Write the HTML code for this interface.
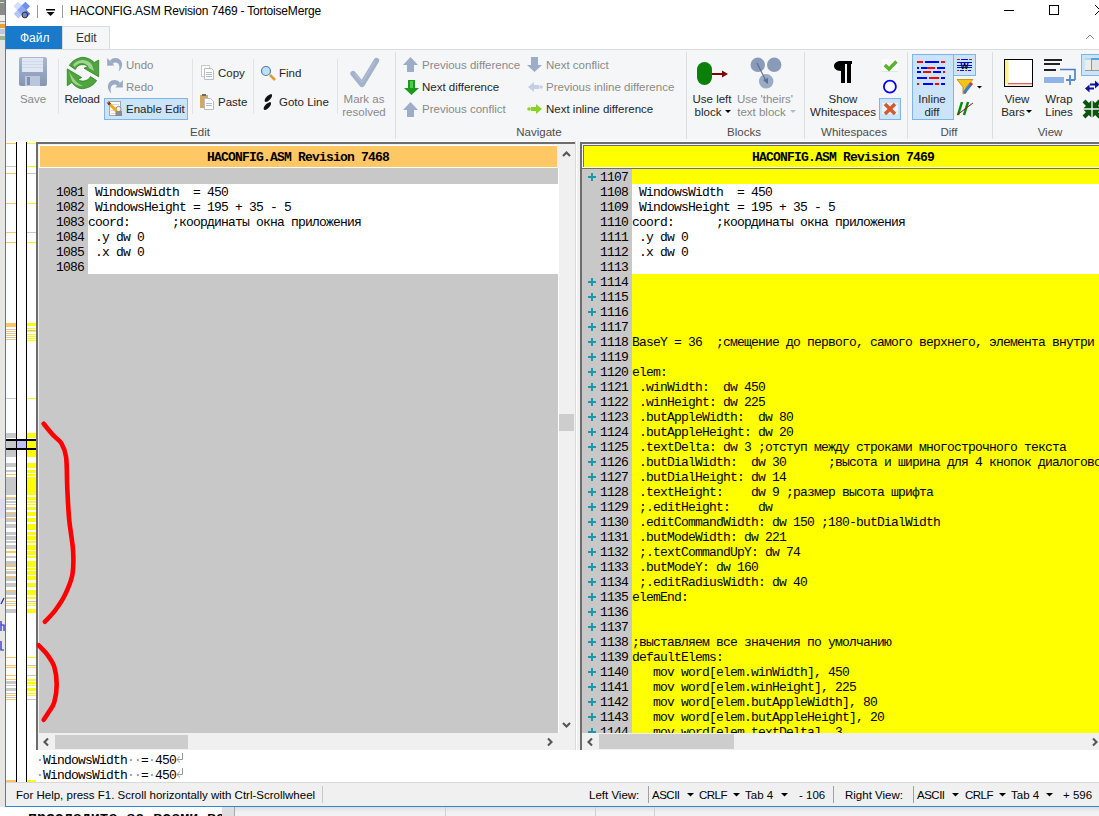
<!DOCTYPE html>
<html><head><meta charset="utf-8">
<style>
*{margin:0;padding:0;box-sizing:border-box}
html,body{width:1099px;height:816px;overflow:hidden;background:#fff;position:relative}
body{font-family:"Liberation Sans",sans-serif;font-size:11.5px;color:#000}
.a{position:absolute}
.t{position:absolute;white-space:pre;line-height:14px}
.row{position:absolute;height:15px;white-space:pre;line-height:15px;padding-top:1px;font-family:"Liberation Mono",monospace;font-size:13px;letter-spacing:-0.8px;color:#000}
.plus{width:8px;height:8px}
.plus:before{content:"";position:absolute;left:3px;top:0;width:2.2px;height:8px;background:#1b98ad}
.plus:after{content:"";position:absolute;left:0;top:2.9px;width:8px;height:2.2px;background:#1b98ad}
</style></head><body>
<!-- outside window -->
<div class="a" style="left:0;top:0;width:5px;height:816px;background:#e6e6e6"></div>
<div class="a" style="left:0;top:0;width:5px;height:15px;background:#8a8a8a"></div>
<div class="a" style="left:0;top:2px;width:4px;height:1px;background:#ddd"></div>
<div class="a" style="left:0;top:15px;width:5px;height:6px;background:#eeeeee"></div>
<div class="a" style="left:0;top:21px;width:5px;height:1px;background:#999"></div>
<div class="a" style="left:0;top:24px;width:5px;height:4px;background:#e8a030"></div>
<div class="a" style="left:0;top:29px;width:5px;height:5px;background:#bcc8d8"></div>
<div class="a" style="left:0;top:36px;width:5px;height:4px;background:#9ab890"></div>
<div class="a" style="left:0;top:499px;width:5px;height:19px;background:#dcdcef"></div>
<svg class="a" style="left:0;top:590px" width="5" height="70"><path d="M1,14 L4,8" stroke="#2020d0" stroke-width="1.2"/><path d="M1,31 V41 M1,35 H4 V41" stroke="#2020d0" stroke-width="1.2" fill="none"/><path d="M1,51 V60 H4" stroke="#2020d0" stroke-width="1.2" fill="none"/></svg>
<!-- window border -->
<div class="a" style="left:5px;top:0;width:1px;height:807px;background:#2b88d8"></div>
<!-- title bar -->
<div class="a" style="left:6px;top:0;width:1093px;height:26px;background:#fff"></div>
<div class="t" style="left:70px;top:4px;font-size:12px;letter-spacing:-0.18px">HACONFIG.ASM Revision 7469 - TortoiseMerge</div>
<!-- tabs -->
<div class="a" style="left:6px;top:26px;width:1093px;height:23px;background:#fff"></div>
<div class="a" style="left:6px;top:26px;width:56px;height:23px;background:#1979ca"></div>
<div class="t" style="left:20px;top:31px;color:#fff;font-size:12px">Файл</div>
<div class="a" style="left:62px;top:26px;width:48px;height:24px;background:#f5f6f7;border:1px solid #dadbdc;border-bottom:none"></div>
<div class="t" style="left:76px;top:31px;font-size:12px;color:#333">Edit</div>
<!-- ribbon -->
<div class="a" style="left:6px;top:49px;width:1093px;height:92px;background:#f5f6f7;border-top:1px solid #dadbdc"></div>
<div class="a" style="left:104px;top:98px;width:84px;height:22px;background:#cce4f7;border:1px solid #7fb4ea"></div>
<div class="a" style="left:879px;top:98px;width:22px;height:22px;background:#cce4f7;border:1px solid #7fb4ea"></div>
<div class="a" style="left:912px;top:54px;width:42px;height:66px;background:#cce4f7;border:1px solid #7fb4ea"></div>
<div class="a" style="left:953px;top:54px;width:23px;height:22px;background:#cce4f7;border:1px solid #7fb4ea"></div>
<div class="a" style="left:1081px;top:54px;width:29px;height:22px;background:#cce4f7;border:1px solid #7fb4ea"></div>
<div class="a" style="left:58px;top:59px;width:1px;height:55px;background:#e1e3e6"></div>
<div class="a" style="left:192px;top:59px;width:1px;height:55px;background:#e1e3e6"></div>
<div class="a" style="left:253px;top:59px;width:1px;height:55px;background:#e1e3e6"></div>
<div class="a" style="left:337px;top:59px;width:1px;height:55px;background:#e1e3e6"></div>
<div class="a" style="left:395px;top:52px;width:1px;height:87px;background:#dcdde0"></div>
<div class="a" style="left:686px;top:52px;width:1px;height:87px;background:#dcdde0"></div>
<div class="a" style="left:804px;top:52px;width:1px;height:87px;background:#dcdde0"></div>
<div class="a" style="left:907px;top:52px;width:1px;height:87px;background:#dcdde0"></div>
<div class="a" style="left:992px;top:52px;width:1px;height:87px;background:#dcdde0"></div>
<div class="t" style="left:-67px;width:200px;text-align:center;top:92px;color:#8a8a8a;font-size:11.5px;">Save</div>
<div class="t" style="left:-18px;width:200px;text-align:center;top:92px;color:#262626;font-size:11.5px;letter-spacing:-0.2px">Reload</div>
<div class="t" style="left:126px;top:58px;color:#8a8a8a;font-size:11.5px;">Undo</div>
<div class="t" style="left:126px;top:80px;color:#8a8a8a;font-size:11.5px;">Redo</div>
<div class="t" style="left:126px;top:102px;color:#262626;font-size:11.5px;">Enable Edit</div>
<div class="t" style="left:218px;top:66px;color:#262626;font-size:11.5px;">Copy</div>
<div class="t" style="left:218px;top:95px;color:#262626;font-size:11.5px;">Paste</div>
<div class="t" style="left:279px;top:66px;color:#262626;font-size:11.5px;">Find</div>
<div class="t" style="left:279px;top:95px;color:#262626;font-size:11.5px;">Goto Line</div>
<div class="t" style="left:264px;width:200px;text-align:center;top:92px;color:#8a8a8a;font-size:11.5px;">Mark as</div>
<div class="t" style="left:264px;width:200px;text-align:center;top:105px;color:#8a8a8a;font-size:11.5px;">resolved</div>
<div class="t" style="left:422px;top:58px;color:#8a8a8a;font-size:11.5px;">Previous difference</div>
<div class="t" style="left:422px;top:80px;color:#262626;font-size:11.5px;">Next difference</div>
<div class="t" style="left:422px;top:102px;color:#8a8a8a;font-size:11.5px;">Previous conflict</div>
<div class="t" style="left:546px;top:58px;color:#8a8a8a;font-size:11.5px;">Next conflict</div>
<div class="t" style="left:546px;top:80px;color:#8a8a8a;font-size:11.5px;">Previous inline difference</div>
<div class="t" style="left:546px;top:102px;color:#262626;font-size:11.5px;">Next inline difference</div>
<div class="t" style="left:612px;width:200px;text-align:center;top:92px;color:#262626;font-size:11.5px;">Use left</div>
<div class="t" style="left:608px;width:200px;text-align:center;top:105px;color:#262626;font-size:11.5px;">block</div>
<div class="t" style="left:665px;width:200px;text-align:center;top:92px;color:#8a8a8a;font-size:11.5px;">Use &#x27;theirs&#x27;</div>
<div class="t" style="left:661.5px;width:200px;text-align:center;top:105px;color:#8a8a8a;font-size:11.5px;">text block</div>
<div class="t" style="left:743px;width:200px;text-align:center;top:92px;color:#262626;font-size:11.5px;">Show</div>
<div class="t" style="left:743px;width:200px;text-align:center;top:105px;color:#262626;font-size:11.5px;">Whitespaces</div>
<div class="t" style="left:832px;width:200px;text-align:center;top:92px;color:#262626;font-size:11.5px;">Inline</div>
<div class="t" style="left:832px;width:200px;text-align:center;top:105px;color:#262626;font-size:11.5px;">diff</div>
<div class="t" style="left:917px;width:200px;text-align:center;top:92px;color:#262626;font-size:11.5px;">View</div>
<div class="t" style="left:913px;width:200px;text-align:center;top:105px;color:#262626;font-size:11.5px;">Bars</div>
<div class="t" style="left:959px;width:200px;text-align:center;top:92px;color:#262626;font-size:11.5px;">Wrap</div>
<div class="t" style="left:959px;width:200px;text-align:center;top:105px;color:#262626;font-size:11.5px;">Lines</div>
<div class="t" style="left:100px;width:200px;text-align:center;top:125px;color:#4c4c4c;font-size:11.5px;">Edit</div>
<div class="t" style="left:439px;width:200px;text-align:center;top:125px;color:#4c4c4c;font-size:11.5px;">Navigate</div>
<div class="t" style="left:644px;width:200px;text-align:center;top:125px;color:#4c4c4c;font-size:11.5px;">Blocks</div>
<div class="t" style="left:754px;width:200px;text-align:center;top:125px;color:#4c4c4c;font-size:11.5px;">Whitespaces</div>
<div class="t" style="left:849px;width:200px;text-align:center;top:125px;color:#4c4c4c;font-size:11.5px;">Diff</div>
<div class="t" style="left:950px;width:200px;text-align:center;top:125px;color:#4c4c4c;font-size:11.5px;">View</div>
<svg class="a" style="left:0;top:0" width="1099" height="142" viewBox="0 0 1099 142">
<defs>
<linearGradient id="gb" x1="0" y1="0" x2="0" y2="1"><stop offset="0" stop-color="#a9b8d0"/><stop offset="1" stop-color="#8596b5"/></linearGradient>
<linearGradient id="gg" x1="0" y1="0" x2="1" y2="0"><stop offset="0" stop-color="#2a9a2a"/><stop offset="0.5" stop-color="#1aa51a"/><stop offset="1" stop-color="#0c7d0c"/></linearGradient>
</defs>
<!-- title bar icons -->
<g>
<polygon points="18,1.7000000000000002 22.6,6.3 18,10.899999999999999 13.4,6.3" fill="#d5defb"/><polygon points="25.4,1.7000000000000002 30.0,6.3 25.4,10.899999999999999 20.799999999999997,6.3" fill="#6f8ff2"/><polygon points="18.4,9.200000000000001 23.0,13.8 18.4,18.4 13.799999999999999,13.8" fill="#b3c4f6"/><polygon points="25.7,9.200000000000001 30.299999999999997,13.8 25.7,18.4 21.1,13.8" fill="#5577e8"/><polygon points="21.8,5.4 26.4,10 21.8,14.6 17.200000000000003,10" fill="#8fa8f4"/>
<circle cx="24.8" cy="15" r="2.8" fill="#7289b0" stroke="#333" stroke-width="1"/>
<rect x="37" y="5" width="1" height="13" fill="#999"/>
<rect x="46" y="9" width="9" height="1.5" fill="#000"/>
<path d="M46.5,12 L54.5,12 L50.5,16 Z" fill="#000"/>
<rect x="62" y="5" width="1" height="13" fill="#999"/>
</g>
<!-- window controls -->
<rect x="1004" y="10" width="10" height="1" fill="#000"/>
<rect x="1049.5" y="5.5" width="9" height="9" fill="none" stroke="#000" stroke-width="1"/>
<path d="M1095,5 L1105,15 M1105,5 L1095,15" stroke="#000" stroke-width="1"/>
<path d="M1086,39 L1090,35 L1094,39" stroke="#888" stroke-width="1" fill="none"/>

<!-- Save floppy -->
<rect x="19" y="57" width="28" height="29" rx="2" fill="url(#gb)"/>
<rect x="22" y="58" width="21" height="14" fill="#dfe7f3"/>
<rect x="22" y="61" width="21" height="1" fill="#cfd9ea"/>
<rect x="22" y="64" width="21" height="1" fill="#cfd9ea"/>
<rect x="22" y="67" width="21" height="1" fill="#cfd9ea"/>
<rect x="25" y="76" width="15" height="10" fill="#b9c6dc"/>
<rect x="27" y="77" width="3" height="8" fill="#7f90b0"/>

<!-- Reload -->
<g transform="translate(64,54)">
<defs><linearGradient id="rg1" x1="0" y1="0" x2="1" y2="1"><stop offset="0" stop-color="#c9ecc0"/><stop offset="0.6" stop-color="#5cb04a"/><stop offset="1" stop-color="#3a9a2a"/></linearGradient></defs>
<path d="M5.4,11.4 C8,7 13,4 18.6,3.3 C23,3.3 27,5.5 30.3,8.4 L34.7,6.1 L34.7,22.8 L20,14.2 L24.2,12.3 C22,10.8 20,10.5 17,10.7 C14.5,11 12.5,13 11.4,15.4 Z" fill="#4ea53c" stroke="#2f7f22" stroke-width="0.8"/>
<path d="M9,11 C12,7 16,6 19,6 C23,6.5 26,8 28,11 L30,17 L25,14 C24,11 21,9 17,9 C14,9.5 12,11 11,13 Z" fill="#bfe5b3" opacity="0.75"/>
<path d="M32.6,26.5 C30,31 25,34 18.6,34.7 C14,34.7 10,31.5 7.9,28.4 L3.3,31.7 L3.3,14.9 L17.7,23.5 L14,25.4 C16,27 18,27.3 20,27 C22.5,26.8 25.5,25 26.5,22.6 Z" fill="#4ea53c" stroke="#2f7f22" stroke-width="0.8"/>
<path d="M5,18 L8,27 C10,30 14,32 19,32 C15,30 12,28 10,25 Z" fill="#bfe5b3" opacity="0.7"/>
</g>
<!-- Undo / Redo -->
<g transform="translate(104,55)" fill="#9aaac5">
<polygon points="3.2,3 3.2,10.8 10.5,10.5"/>
<path d="M6,5.5 C9,2.2 14,2.2 16.8,5.5 C19,8.5 18.5,13 14.7,16.5 C15.8,13 15.8,10.5 14,8.5 C12.3,6.8 10,7.2 8.5,9 Z"/>
<polygon points="18.9,25 18.9,32.6 11.3,32.6"/>
<path d="M16,27.5 C13,24.2 8,24.2 5.2,27.5 C3,30.5 3.5,35 7.3,38.5 C6.2,35 6.2,32.5 8,30.5 C9.7,28.8 12,29.2 13.5,31 Z"/>
</g>
<!-- Enable edit icon -->
<rect x="109.5" y="101.5" width="11" height="14" fill="#f8f8f8" stroke="#a8a8a8" stroke-width="1"/>
<rect x="111" y="104" width="8" height="1" fill="#d8d8d8"/><rect x="111" y="107" width="8" height="1" fill="#d8d8d8"/><rect x="111" y="110" width="5" height="1" fill="#d8d8d8"/><rect x="111" y="113" width="5" height="1" fill="#d8d8d8"/>
<circle cx="118.5" cy="109" r="2.6" fill="#f4f4f4" stroke="#8a8a8a" stroke-width="1"/>
<rect x="115.5" y="111" width="6.5" height="5" fill="#8c8c8c"/>
<path d="M109.5,104 L116.5,111" stroke="#f0a818" stroke-width="2.8"/>
<path d="M108.3,102.8 L110,104.5" stroke="#3a4a4a" stroke-width="2.8"/>
<path d="M107.5,102 L108.5,103" stroke="#e06030" stroke-width="2.8"/>
<!-- Copy -->
<rect x="201.5" y="65.5" width="8" height="11" fill="#fff" stroke="#c8c8c8"/>
<path d="M204.5,68.5 h7 l2,2 v9 h-9 z" fill="#fff" stroke="#bdbdbd"/>
<rect x="206" y="72" width="6" height="1" fill="#a9bfd9"/><rect x="206" y="74" width="6" height="1" fill="#a9bfd9"/><rect x="206" y="76" width="6" height="1" fill="#a9bfd9"/>
<!-- Paste -->
<rect x="200" y="95" width="8" height="13" fill="#d0ab5e"/>
<rect x="202" y="94" width="4" height="2" fill="#6a6a6a"/>
<path d="M204.5,98.5 h6 l3,3 v8 h-9 z" fill="#fff" stroke="#bdbdbd"/>
<rect x="206" y="103" width="6" height="1" fill="#a9bfd9"/><rect x="206" y="105" width="6" height="1" fill="#a9bfd9"/>

<!-- Find -->
<path d="M270,75 L275,80" stroke="#e39a2a" stroke-width="2.5"/>
<circle cx="266" cy="71" r="4.5" fill="#bfe0f7" stroke="#4d7fb0" stroke-width="1.2"/>
<!-- Goto line -->
<path d="M271,94 C274,95 270,101 266,102 C263,102 265,96 271,94 Z" fill="#111"/>
<path d="M270,102 C273,103 269,109 265,110 C262,110 264,104 270,102 Z" fill="#111"/>

<!-- Mark as resolved -->
<path d="M353,73.5 L362,84.5 L376.5,60.5" stroke="#a3b1ca" stroke-width="5.4" stroke-linecap="round" stroke-linejoin="round" fill="none"/>
<path d="M355,74 L362,82.5 L374.5,62" stroke="#b8c4d8" stroke-width="1.5" stroke-linecap="round" fill="none" opacity="0.6"/>

<!-- nav arrows (up disabled) -->
<g fill="#9eadc7">
<polygon points="410.5,57 418,65 414,65 414,72 407,72 407,65 403,65"/>
<polygon points="410.5,102 418,110 414,110 414,117 407,117 407,110 403,110"/>
<polygon points="534.5,72 542,65 538,65 538,57 531,57 531,65 527,65"/>
</g>
<polygon points="411.5,95 419,88 415,88 415,80 408,80 408,88 404,88" fill="#1a9a1a"/>
<rect x="410" y="81" width="3" height="7" fill="#4fc94f"/>
<!-- prev inline (light) -->
<g fill="#c3d0e3">
<polygon points="528,87 534,82 534,85 539,85 539,89 534,89 534,92"/>
<circle cx="541" cy="87" r="1.8"/>
</g>
<!-- next inline green -->
<g fill="#8ad22a">
<polygon points="542,109 536,104 536,107 531,107 531,111 536,111 536,114"/>
<circle cx="529" cy="109" r="1.8"/>
</g>

<!-- Use left block -->
<rect x="697" y="62" width="15" height="23" rx="7.5" fill="#0a800a"/>
<rect x="712" y="73" width="11" height="2" fill="#800000"/>
<polygon points="722,70.5 728,74 722,77.5" fill="#800000"/>
<polygon points="725,110 731,110 728,113" fill="#000"/>
<!-- Use theirs -->
<circle cx="757.8" cy="64.8" r="7.2" fill="#8a9bb8"/>
<circle cx="774.2" cy="64.8" r="7.2" fill="#8a9bb8"/>
<circle cx="766.2" cy="81.3" r="7.2" fill="#9aabc6"/>
<path d="M757,63 L767,83" stroke="#5b6f93" stroke-width="1.2"/>
<polygon points="768,84 763,80 768,78" fill="#5b6f93"/>
<polygon points="790,110 796,110 793,113" fill="#bbb"/>

<!-- Pilcrow -->
<path d="M841,61 h11 v3 h-1 v19 h-4 v-19 h-2 v19 h-4 v-12 c-5,0 -7,-3 -7,-5 c0,-3 3,-5 7,-5 z" fill="#000"/>
<!-- small ws icons -->
<rect x="882" y="59" width="16" height="12" fill="#fbfbfb"/>
<rect x="882" y="71" width="16" height="1" fill="#e4e4e4"/><path d="M884.8,65 L889,69 L896.5,61.5" stroke="#55b52a" stroke-width="3.4" fill="none"/>
<rect x="882" y="81" width="16" height="12" fill="#fbfbfb"/>
<circle cx="889.9" cy="86.7" r="6" fill="none" stroke="#0000ff" stroke-width="1.8"/>
<rect x="882" y="103" width="16" height="11" fill="#f6f8fb" opacity="0.8"/>
<rect x="882" y="104" width="16" height="1.5" fill="#e8e8e8"/><rect x="882" y="111" width="16" height="1.5" fill="#e8e8e8"/><path d="M885,104 L895,114 M895,104 L885,114" stroke="#d4582e" stroke-width="3.4"/>

<!-- Inline diff icon -->
<g>
<rect x="917" y="61" width="6" height="2" fill="#f00"/><rect x="925" y="61" width="14" height="2" fill="#00f"/><rect x="941" y="61" width="4" height="2" fill="#f00"/>
<rect x="917" y="67" width="2" height="2" fill="#00f"/><rect x="921" y="67" width="6" height="2" fill="#00f"/><rect x="927" y="67" width="8" height="2" fill="#f00"/><rect x="937" y="67" width="8" height="2" fill="#00f"/>
<rect x="917" y="71" width="4" height="2" fill="#00f"/><rect x="923" y="71" width="8" height="2" fill="#f00"/><rect x="933" y="71" width="8" height="2" fill="#00f"/><rect x="943" y="71" width="2" height="2" fill="#f00"/>
<rect x="917" y="77" width="10" height="2" fill="#00f"/><rect x="929" y="77" width="10" height="2" fill="#f00"/><rect x="941" y="77" width="4" height="2" fill="#00f"/>
<rect x="917" y="83" width="2" height="2" fill="#f00"/><rect x="923" y="83" width="10" height="2" fill="#00f"/><rect x="935" y="83" width="4" height="2" fill="#f00"/><rect x="941" y="83" width="4" height="2" fill="#00f"/>
</g>
<!-- W icon -->
<rect x="957" y="59" width="3" height="1" fill="#f00"/><rect x="961" y="59" width="7" height="1" fill="#00f"/><rect x="969" y="59" width="3" height="1" fill="#f00"/>
<rect x="957" y="62" width="15" height="1" fill="#00f"/><rect x="957" y="65" width="15" height="1" fill="#00f"/><rect x="957" y="67" width="15" height="1" fill="#00f"/>
<rect x="957" y="70" width="2" height="1" fill="#f00"/><rect x="960" y="70" width="4" height="1" fill="#00f"/><rect x="965" y="70" width="2" height="1" fill="#f00"/><rect x="968" y="70" width="3" height="1" fill="#00f"/>
<text x="964.5" y="68.5" font-family="Liberation Sans" font-weight="bold" font-size="8.5" text-anchor="middle" fill="#000">W</text>
<!-- funnel -->
<path d="M957,79.5 L973,79.5 L966,87 L966,93 L963,94 L963,87 Z" fill="#f5c514" stroke="#b8860b" stroke-width="0.8"/>
<path d="M964,93 L971,84" stroke="#3b7bd6" stroke-width="3"/>
<path d="M970,85 L972,83" stroke="#e03030" stroke-width="3"/>
<polygon points="977,86 982,86 979.5,88.5" fill="#000"/>
<!-- // icon -->
<path d="M962,102 L958,115 M968,102 L964,115" stroke="#0a8a0a" stroke-width="2.5"/>
<path d="M957,115 L973,103" stroke="#8a1a1a" stroke-width="1"/>

<!-- View bars -->
<rect x="1004.5" y="59.5" width="28" height="27" fill="#fff" stroke="#000"/>
<rect x="1005" y="60" width="3.5" height="24" fill="#fff28c"/>
<rect x="1008" y="83" width="24" height="1.5" fill="#e06060"/>
<rect x="1005" y="84.5" width="27" height="1.5" fill="#f6efd8"/>
<polygon points="1026,110 1032,110 1029,113" fill="#000"/>
<!-- Wrap lines -->
<rect x="1044" y="59" width="18" height="2" fill="#222"/>
<rect x="1044" y="63" width="16" height="2" fill="#222"/>
<rect x="1044" y="69" width="12" height="2" fill="#222"/>
<path d="M1060,69.5 H1075 V80" stroke="#4a7cc4" stroke-width="1.6" fill="none"/>
<rect x="1044" y="77" width="20" height="6" fill="#8fb3e8"/>
<path d="M1066,80 H1075 M1070,75 V85" stroke="#5a88cc" stroke-width="1.8"/>
<!-- right column icons -->
<rect x="1085" y="58" width="14" height="13" fill="#e4e4e4"/>
<rect x="1085" y="58" width="14" height="2" fill="#52a6e0"/>
<rect x="1085" y="70" width="14" height="1" fill="#9a9a9a"/>
<rect x="1091" y="58" width="1" height="13" fill="#52a6e0"/>
<path d="M1090,84.5 H1097 M1087,88.5 H1094" stroke="#10109a" stroke-width="2.2"/>
<polygon points="1099.5,84.5 1095,80.5 1095,88.5" fill="#10109a"/>
<polygon points="1085,88.5 1089.5,84.5 1089.5,92.5" fill="#10109a"/>
<g fill="#0b540b">
<polygon points="1091.3,108.3 1091.3,100.5 1083.5,108.3"/>
<polygon points="1092.7,108.3 1092.7,100.5 1100.5,108.3"/>
<polygon points="1091.3,109.7 1091.3,117.5 1083.5,109.7"/>
<polygon points="1092.7,109.7 1092.7,117.5 1100.5,109.7"/>
</g>
<path d="M1084,101 L1088,105 M1100,101 L1096,105 M1084,117 L1088,113 M1100,117 L1096,113" stroke="#0b540b" stroke-width="4"/>
<rect x="1085" y="58" width="6" height="12" fill="#f4f4f4" opacity="0.6"/>
</svg>

<!-- ribbon bottom border -->
<div class="a" style="left:36px;top:142px;width:539px;height:2px;background:#6d6d6d"></div>
<div class="a" style="left:580px;top:142px;width:519px;height:2px;background:#6d6d6d"></div>

<!-- location bar -->
<div class="a" style="left:6px;top:141px;width:30px;height:641px;background:#fff"></div>
<div class="a" style="left:6px;top:143px;width:10px;height:1px;background:#ffc564"></div>
<div class="a" style="left:27px;top:143px;width:9px;height:1px;background:#ffff00"></div>
<div class="a" style="left:6px;top:166px;width:10px;height:1px;background:#c8c8c8"></div>
<div class="a" style="left:27px;top:166px;width:9px;height:1px;background:#ffff00"></div>
<div class="a" style="left:6px;top:173px;width:10px;height:1px;background:#ffc564"></div>
<div class="a" style="left:27px;top:173px;width:9px;height:1px;background:#c8c8c8"></div>
<div class="a" style="left:6px;top:203px;width:10px;height:1px;background:#ffc564"></div>
<div class="a" style="left:27px;top:203px;width:9px;height:1px;background:#ffff00"></div>
<div class="a" style="left:6px;top:232px;width:10px;height:1px;background:#ffc564"></div>
<div class="a" style="left:27px;top:232px;width:9px;height:1px;background:#c8c8c8"></div>
<div class="a" style="left:6px;top:242px;width:10px;height:1px;background:#ffc564"></div>
<div class="a" style="left:27px;top:242px;width:9px;height:1px;background:#ffff00"></div>
<div class="a" style="left:6px;top:323px;width:10px;height:4px;background:#ffc564"></div>
<div class="a" style="left:27px;top:323px;width:9px;height:3px;background:#ffff00"></div>
<div class="a" style="left:6px;top:329px;width:10px;height:1px;background:#c8c8c8"></div>
<div class="a" style="left:6px;top:331px;width:10px;height:1px;background:#ffc564"></div>
<div class="a" style="left:6px;top:333px;width:10px;height:1px;background:#c8c8c8"></div>
<div class="a" style="left:6px;top:335px;width:10px;height:1px;background:#ffc564"></div>
<div class="a" style="left:6px;top:337px;width:10px;height:1px;background:#c8c8c8"></div>
<div class="a" style="left:6px;top:339px;width:10px;height:1px;background:#ffc564"></div>
<div class="a" style="left:27px;top:328px;width:9px;height:1px;background:#ffff00"></div>
<div class="a" style="left:27px;top:331px;width:9px;height:1px;background:#ffff00"></div>
<div class="a" style="left:27px;top:334px;width:9px;height:1px;background:#ffff00"></div>
<div class="a" style="left:27px;top:336px;width:9px;height:1px;background:#ffff00"></div>
<div class="a" style="left:27px;top:338px;width:9px;height:1px;background:#ffff00"></div>
<div class="a" style="left:27px;top:340px;width:9px;height:1px;background:#ffff00"></div>
<div class="a" style="left:27px;top:330px;width:9px;height:1px;background:#c8c8c8"></div>
<div class="a" style="left:6px;top:398px;width:10px;height:1px;background:#c8c8c8"></div>
<div class="a" style="left:27px;top:398px;width:9px;height:1px;background:#ffff00"></div>
<div class="a" style="left:6px;top:433px;width:10px;height:5px;background:#c8c8c8"></div>
<div class="a" style="left:6px;top:441px;width:10px;height:7px;background:#c8c8c8"></div>
<div class="a" style="left:6px;top:450px;width:10px;height:7px;background:#c8c8c8"></div>
<div class="a" style="left:6px;top:463px;width:10px;height:3.5px;background:#c8c8c8"></div>
<div class="a" style="left:6px;top:470px;width:10px;height:2px;background:#c8c8c8"></div>
<div class="a" style="left:6px;top:473.5px;width:10px;height:1.5px;background:#ffc564"></div>
<div class="a" style="left:6px;top:477px;width:10px;height:17.5px;background:#c8c8c8"></div>
<div class="a" style="left:6px;top:496.7px;width:10px;height:1.3px;background:#ffc564"></div>
<div class="a" style="left:6px;top:498px;width:10px;height:1.7px;background:#c8c8c8"></div>
<div class="a" style="left:6px;top:501px;width:10px;height:1.7px;background:#c8c8c8"></div>
<div class="a" style="left:6px;top:504px;width:10px;height:1px;background:#c8c8c8"></div>
<div class="a" style="left:6px;top:507px;width:10px;height:1.3px;background:#ffc564"></div>
<div class="a" style="left:6px;top:508.3px;width:10px;height:1.3px;background:#c8c8c8"></div>
<div class="a" style="left:6px;top:511.7px;width:10px;height:1.3px;background:#ffc564"></div>
<div class="a" style="left:6px;top:513px;width:10px;height:4px;background:#c8c8c8"></div>
<div class="a" style="left:6px;top:517.7px;width:10px;height:1.3px;background:#ffc564"></div>
<div class="a" style="left:6px;top:519px;width:10px;height:2.6px;background:#c8c8c8"></div>
<div class="a" style="left:6px;top:523.7px;width:10px;height:4.7px;background:#c8c8c8"></div>
<div class="a" style="left:6px;top:531.8px;width:10px;height:3px;background:#c8c8c8"></div>
<div class="a" style="left:6px;top:536px;width:10px;height:4px;background:#c8c8c8"></div>
<div class="a" style="left:6px;top:541.3px;width:10px;height:2.1px;background:#c8c8c8"></div>
<div class="a" style="left:6px;top:545.1px;width:10px;height:3.5px;background:#c8c8c8"></div>
<div class="a" style="left:6px;top:550.7px;width:10px;height:2.6px;background:#ffc564"></div>
<div class="a" style="left:6px;top:555.8px;width:10px;height:2.6px;background:#c8c8c8"></div>
<div class="a" style="left:6px;top:560.6px;width:10px;height:3.3px;background:#c8c8c8"></div>
<div class="a" style="left:6px;top:563.6px;width:10px;height:1.5px;background:#ffc564"></div>
<div class="a" style="left:6px;top:565.1px;width:10px;height:1.8px;background:#c8c8c8"></div>
<div class="a" style="left:6px;top:568.6px;width:10px;height:1.3px;background:#ffc564"></div>
<div class="a" style="left:6px;top:571.1px;width:10px;height:3px;background:#c8c8c8"></div>
<div class="a" style="left:6px;top:575.9px;width:10px;height:1.2px;background:#ffc564"></div>
<div class="a" style="left:6px;top:577.1px;width:10px;height:3.5px;background:#c8c8c8"></div>
<div class="a" style="left:6px;top:583.1px;width:10px;height:3.9px;background:#c8c8c8"></div>
<div class="a" style="left:6px;top:589.6px;width:10px;height:1.2px;background:#ffc564"></div>
<div class="a" style="left:6px;top:590.8px;width:10px;height:3.9px;background:#c8c8c8"></div>
<div class="a" style="left:6px;top:596.8px;width:10px;height:2.2px;background:#c8c8c8"></div>
<div class="a" style="left:6px;top:600.7px;width:10px;height:1.3px;background:#ffc564"></div>
<div class="a" style="left:6px;top:602.8px;width:10px;height:0.9px;background:#c8c8c8"></div>
<div class="a" style="left:6px;top:604.6px;width:10px;height:1.7px;background:#ffc564"></div>
<div class="a" style="left:6px;top:608.8px;width:10px;height:3.9px;background:#c8c8c8"></div>
<div class="a" style="left:27px;top:433px;width:9px;height:4.5px;background:#ffff00"></div>
<div class="a" style="left:27px;top:441px;width:9px;height:7px;background:#ffff00"></div>
<div class="a" style="left:27px;top:449.7px;width:9px;height:7.3px;background:#ffff00"></div>
<div class="a" style="left:27px;top:463px;width:9px;height:4.7px;background:#ffff00"></div>
<div class="a" style="left:27px;top:470px;width:9px;height:2.5px;background:#ffff00"></div>
<div class="a" style="left:27px;top:473.5px;width:9px;height:2px;background:#ffff00"></div>
<div class="a" style="left:27px;top:477px;width:9px;height:17.5px;background:#ffff00"></div>
<div class="a" style="left:27px;top:496.7px;width:9px;height:3.4px;background:#ffff00"></div>
<div class="a" style="left:27px;top:501px;width:9px;height:2.1px;background:#ffff00"></div>
<div class="a" style="left:27px;top:504px;width:9px;height:1px;background:#ffff00"></div>
<div class="a" style="left:27px;top:507px;width:9px;height:3px;background:#ffff00"></div>
<div class="a" style="left:27px;top:511.7px;width:9px;height:4.3px;background:#ffff00"></div>
<div class="a" style="left:27px;top:517.7px;width:9px;height:4.3px;background:#ffff00"></div>
<div class="a" style="left:27px;top:524.1px;width:9px;height:5.6px;background:#ffff00"></div>
<div class="a" style="left:27px;top:531.8px;width:9px;height:3px;background:#ffff00"></div>
<div class="a" style="left:27px;top:536.1px;width:9px;height:3.5px;background:#ffff00"></div>
<div class="a" style="left:27px;top:540.8px;width:9px;height:2.6px;background:#ffff00"></div>
<div class="a" style="left:27px;top:544.7px;width:9px;height:5.1px;background:#ffff00"></div>
<div class="a" style="left:27px;top:550.7px;width:9px;height:4.3px;background:#ffff00"></div>
<div class="a" style="left:27px;top:555.6px;width:9px;height:2.6px;background:#ffff00"></div>
<div class="a" style="left:27px;top:560.6px;width:9px;height:6.3px;background:#ffff00"></div>
<div class="a" style="left:27px;top:568.1px;width:9px;height:1.8px;background:#ffff00"></div>
<div class="a" style="left:27px;top:571.1px;width:9px;height:3.9px;background:#ffff00"></div>
<div class="a" style="left:27px;top:575.9px;width:9px;height:4.2px;background:#ffff00"></div>
<div class="a" style="left:27px;top:583.1px;width:9px;height:3.9px;background:#ffff00"></div>
<div class="a" style="left:27px;top:590px;width:9px;height:4.7px;background:#ffff00"></div>
<div class="a" style="left:27px;top:596.8px;width:9px;height:2.2px;background:#ffff00"></div>
<div class="a" style="left:27px;top:600.7px;width:9px;height:1.3px;background:#c8c8c8"></div>
<div class="a" style="left:27px;top:602.8px;width:9px;height:1.3px;background:#ffff00"></div>
<div class="a" style="left:27px;top:604.6px;width:9px;height:1.7px;background:#ffff00"></div>
<div class="a" style="left:27px;top:608.8px;width:9px;height:3.9px;background:#ffff00"></div>
<div class="a" style="left:6px;top:657px;width:10px;height:1px;background:#ffc564"></div>
<div class="a" style="left:6px;top:665px;width:10px;height:1px;background:#ffc564"></div>
<div class="a" style="left:6px;top:667px;width:10px;height:1px;background:#ffc564"></div>
<div class="a" style="left:6px;top:675px;width:10px;height:1px;background:#ffc564"></div>
<div class="a" style="left:6px;top:679px;width:10px;height:1px;background:#ffc564"></div>
<div class="a" style="left:6px;top:681px;width:10px;height:3px;background:#c8c8c8"></div>
<div class="a" style="left:6px;top:685px;width:10px;height:1px;background:#c8c8c8"></div>
<div class="a" style="left:6px;top:688px;width:10px;height:3px;background:#c8c8c8"></div>
<div class="a" style="left:6px;top:693px;width:10px;height:1px;background:#c8c8c8"></div>
<div class="a" style="left:6px;top:695px;width:10px;height:1px;background:#ffc564"></div>
<div class="a" style="left:6px;top:697px;width:10px;height:1px;background:#c8c8c8"></div>
<div class="a" style="left:6px;top:699px;width:10px;height:1px;background:#ffc564"></div>
<div class="a" style="left:27px;top:657px;width:9px;height:1px;background:#ffff00"></div>
<div class="a" style="left:27px;top:665px;width:9px;height:1px;background:#c8c8c8"></div>
<div class="a" style="left:27px;top:667px;width:9px;height:1px;background:#ffff00"></div>
<div class="a" style="left:27px;top:675px;width:9px;height:1px;background:#c8c8c8"></div>
<div class="a" style="left:27px;top:679px;width:9px;height:2px;background:#ffff00"></div>
<div class="a" style="left:27px;top:682px;width:9px;height:2px;background:#ffff00"></div>
<div class="a" style="left:27px;top:685px;width:9px;height:1px;background:#ffff00"></div>
<div class="a" style="left:27px;top:688px;width:9px;height:3px;background:#ffff00"></div>
<div class="a" style="left:27px;top:693px;width:9px;height:1px;background:#ffff00"></div>
<div class="a" style="left:27px;top:695px;width:9px;height:1px;background:#ffff00"></div>
<div class="a" style="left:27px;top:699px;width:9px;height:1px;background:#c8c8c8"></div>
<div class="a" style="left:6px;top:780px;width:10px;height:2px;background:#ffc564"></div>
<div class="a" style="left:27px;top:780px;width:9px;height:2px;background:#ffff00"></div>
<div class="a" style="left:16px;top:142px;width:1px;height:640px;background:#000"></div>
<div class="a" style="left:26px;top:142px;width:1px;height:640px;background:#000"></div>
<div class="a" style="left:6px;top:439px;width:31px;height:2px;background:#000"></div>
<div class="a" style="left:6px;top:448px;width:31px;height:2px;background:#000"></div>
<div class="a" style="left:17px;top:441px;width:9px;height:7px;background:#c0c0ff"></div>

<!-- panes background -->
<div class="a" style="left:37px;top:144px;width:1062px;height:606px;background:#f0f0f0"></div>
<!-- left pane -->
<div class="a" style="left:36px;top:142px;width:2px;height:608px;background:#6d6d6d"></div>
<div class="a" style="left:38px;top:144px;width:1px;height:606px;background:#f0f0f0"></div>
<div class="a" style="left:39px;top:145px;width:518px;height:23px;background:#fff"></div>
<div class="a" style="left:40px;top:146px;width:517px;height:21px;background:#ffc864"></div>
<div class="row" style="left:207px;top:149px;font-weight:bold">HACONFIG.ASM Revision 7468</div>
<div class="a" style="left:39px;top:168px;width:519px;height:565px;background:#c8c8c8"></div>
<div class="a" style="left:0;top:0;width:558px;height:733px;overflow:hidden"><div class="a" style="left:88px;top:184px;width:470px;height:90px;background:#fff"></div>
<div class="row" style="left:56px;top:184px">1081</div>
<div class="row" style="left:88px;top:184px"> WindowsWidth  = 450</div>
<div class="row" style="left:56px;top:199px">1082</div>
<div class="row" style="left:88px;top:199px"> WindowsHeight = 195 + 35 - 5</div>
<div class="row" style="left:56px;top:214px">1083</div>
<div class="row" style="left:88px;top:214px">coord:      ;координаты окна приложения</div>
<div class="row" style="left:56px;top:229px">1084</div>
<div class="row" style="left:88px;top:229px"> .y dw 0</div>
<div class="row" style="left:56px;top:244px">1085</div>
<div class="row" style="left:88px;top:244px"> .x dw 0</div>
<div class="row" style="left:56px;top:259px">1086</div></div>
<div class="a" style="left:558px;top:168px;width:1px;height:565px;background:#fff"></div>
<div class="a" style="left:559px;top:146px;width:16px;height:604px;background:#f0f0f0"></div>
<div class="a" style="left:559px;top:414px;width:15px;height:17px;background:#cdcdcd"></div>
<div class="a" style="left:39px;top:733px;width:520px;height:17px;background:#f0f0f0"></div>
<div class="a" style="left:55px;top:735px;width:133px;height:14px;background:#cdcdcd"></div>

<!-- splitter -->
<div class="a" style="left:575px;top:141px;width:6px;height:609px;background:#f0f0f0"></div>
<div class="a" style="left:575px;top:141px;width:1px;height:609px;background:#dadada"></div>
<div class="a" style="left:576px;top:141px;width:1px;height:609px;background:#ffffff"></div>
<!-- right pane -->
<div class="a" style="left:580px;top:142px;width:2px;height:608px;background:#6d6d6d"></div>
<div class="a" style="left:582px;top:145px;width:517px;height:23px;background:#fff"></div>
<div class="a" style="left:583px;top:145px;width:516px;height:22px;background:#ffff00;border-top:1px solid #6d6d78;border-left:1px solid #6d6d78"></div>
<div class="a" style="left:582px;top:168px;width:517px;height:1px;background:#6d6d6d"></div>
<div class="row" style="left:752px;top:149px;font-weight:bold">HACONFIG.ASM Revision 7469</div>
<div class="a" style="left:582px;top:169px;width:517px;height:564px;background:#c8c8c8"></div>
<div class="a" style="left:0;top:0;width:1099px;height:733px;overflow:hidden"><div class="a" style="left:632px;top:169px;width:467px;height:564px;background:#ffff00"></div>
<div class="a" style="left:632px;top:184px;width:467px;height:90px;background:#fff"></div>
<div class="a plus" style="left:588px;top:173px"></div>
<div class="row" style="left:600px;top:169px">1107</div>
<div class="row" style="left:600px;top:184px">1108</div>
<div class="row" style="left:632px;top:184px"> WindowsWidth  = 450</div>
<div class="row" style="left:600px;top:199px">1109</div>
<div class="row" style="left:632px;top:199px"> WindowsHeight = 195 + 35 - 5</div>
<div class="row" style="left:600px;top:214px">1110</div>
<div class="row" style="left:632px;top:214px">coord:      ;координаты окна приложения</div>
<div class="row" style="left:600px;top:229px">1111</div>
<div class="row" style="left:632px;top:229px"> .y dw 0</div>
<div class="row" style="left:600px;top:244px">1112</div>
<div class="row" style="left:632px;top:244px"> .x dw 0</div>
<div class="row" style="left:600px;top:259px">1113</div>
<div class="a plus" style="left:588px;top:278px"></div>
<div class="row" style="left:600px;top:274px">1114</div>
<div class="a plus" style="left:588px;top:293px"></div>
<div class="row" style="left:600px;top:289px">1115</div>
<div class="a plus" style="left:588px;top:308px"></div>
<div class="row" style="left:600px;top:304px">1116</div>
<div class="a plus" style="left:588px;top:323px"></div>
<div class="row" style="left:600px;top:319px">1117</div>
<div class="a plus" style="left:588px;top:338px"></div>
<div class="row" style="left:600px;top:334px">1118</div>
<div class="row" style="left:632px;top:334px">BaseY = 36  ;смещение до первого, самого верхнего, элемента внутри</div>
<div class="a plus" style="left:588px;top:353px"></div>
<div class="row" style="left:600px;top:349px">1119</div>
<div class="a plus" style="left:588px;top:368px"></div>
<div class="row" style="left:600px;top:364px">1120</div>
<div class="row" style="left:632px;top:364px">elem:</div>
<div class="a plus" style="left:588px;top:383px"></div>
<div class="row" style="left:600px;top:379px">1121</div>
<div class="row" style="left:632px;top:379px"> .winWidth:  dw 450</div>
<div class="a plus" style="left:588px;top:398px"></div>
<div class="row" style="left:600px;top:394px">1122</div>
<div class="row" style="left:632px;top:394px"> .winHeight: dw 225</div>
<div class="a plus" style="left:588px;top:413px"></div>
<div class="row" style="left:600px;top:409px">1123</div>
<div class="row" style="left:632px;top:409px"> .butAppleWidth:  dw 80</div>
<div class="a plus" style="left:588px;top:428px"></div>
<div class="row" style="left:600px;top:424px">1124</div>
<div class="row" style="left:632px;top:424px"> .butAppleHeight: dw 20</div>
<div class="a plus" style="left:588px;top:443px"></div>
<div class="row" style="left:600px;top:439px">1125</div>
<div class="row" style="left:632px;top:439px"> .textDelta: dw 3 ;отступ между строками многострочного текста</div>
<div class="a plus" style="left:588px;top:458px"></div>
<div class="row" style="left:600px;top:454px">1126</div>
<div class="row" style="left:632px;top:454px"> .butDialWidth:  dw 30      ;высота и ширина для 4 кнопок диалогового окна</div>
<div class="a plus" style="left:588px;top:473px"></div>
<div class="row" style="left:600px;top:469px">1127</div>
<div class="row" style="left:632px;top:469px"> .butDialHeight: dw 14</div>
<div class="a plus" style="left:588px;top:488px"></div>
<div class="row" style="left:600px;top:484px">1128</div>
<div class="row" style="left:632px;top:484px"> .textHeight:    dw 9 ;размер высота шрифта</div>
<div class="a plus" style="left:588px;top:503px"></div>
<div class="row" style="left:600px;top:499px">1129</div>
<div class="row" style="left:632px;top:499px"> ;.editHeight:    dw</div>
<div class="a plus" style="left:588px;top:518px"></div>
<div class="row" style="left:600px;top:514px">1130</div>
<div class="row" style="left:632px;top:514px"> .editCommandWidth: dw 150 ;180-butDialWidth</div>
<div class="a plus" style="left:588px;top:533px"></div>
<div class="row" style="left:600px;top:529px">1131</div>
<div class="row" style="left:632px;top:529px"> .butModeWidth: dw 221</div>
<div class="a plus" style="left:588px;top:548px"></div>
<div class="row" style="left:600px;top:544px">1132</div>
<div class="row" style="left:632px;top:544px"> ;.textCommandUpY: dw 74</div>
<div class="a plus" style="left:588px;top:563px"></div>
<div class="row" style="left:600px;top:559px">1133</div>
<div class="row" style="left:632px;top:559px"> .butModeY: dw 160</div>
<div class="a plus" style="left:588px;top:578px"></div>
<div class="row" style="left:600px;top:574px">1134</div>
<div class="row" style="left:632px;top:574px"> ;.editRadiusWidth: dw 40</div>
<div class="a plus" style="left:588px;top:593px"></div>
<div class="row" style="left:600px;top:589px">1135</div>
<div class="row" style="left:632px;top:589px">elemEnd:</div>
<div class="a plus" style="left:588px;top:608px"></div>
<div class="row" style="left:600px;top:604px">1136</div>
<div class="a plus" style="left:588px;top:623px"></div>
<div class="row" style="left:600px;top:619px">1137</div>
<div class="a plus" style="left:588px;top:638px"></div>
<div class="row" style="left:600px;top:634px">1138</div>
<div class="row" style="left:632px;top:634px">;выставляем все значения по умолчанию</div>
<div class="a plus" style="left:588px;top:653px"></div>
<div class="row" style="left:600px;top:649px">1139</div>
<div class="row" style="left:632px;top:649px">defaultElems:</div>
<div class="a plus" style="left:588px;top:668px"></div>
<div class="row" style="left:600px;top:664px">1140</div>
<div class="row" style="left:632px;top:664px">   mov word[elem.winWidth], 450</div>
<div class="a plus" style="left:588px;top:683px"></div>
<div class="row" style="left:600px;top:679px">1141</div>
<div class="row" style="left:632px;top:679px">   mov word[elem.winHeight], 225</div>
<div class="a plus" style="left:588px;top:698px"></div>
<div class="row" style="left:600px;top:694px">1142</div>
<div class="row" style="left:632px;top:694px">   mov word[elem.butAppleWidth], 80</div>
<div class="a plus" style="left:588px;top:713px"></div>
<div class="row" style="left:600px;top:709px">1143</div>
<div class="row" style="left:632px;top:709px">   mov word[elem.butAppleHeight], 20</div>
<div class="a plus" style="left:588px;top:728px"></div>
<div class="row" style="left:600px;top:724px">1144</div>
<div class="row" style="left:632px;top:724px">   mov word[elem.textDelta], 3</div></div>
<div class="a" style="left:582px;top:733px;width:517px;height:17px;background:#f0f0f0"></div>
<div class="a" style="left:599px;top:734px;width:135px;height:15px;background:#cdcdcd"></div>

<svg class="a" style="left:0;top:0" width="1099" height="816">
<path d="M563,156 L566.5,152.5 L570,156" stroke="#555" stroke-width="2.1" fill="none"/>
<path d="M563,723 L566.5,726.5 L570,723" stroke="#555" stroke-width="2.1" fill="none"/>
<path d="M548,738.5 L551.5,742 L548,745.5" stroke="#555" stroke-width="2.1" fill="none"/>
<path d="M48,738.5 L44.5,742 L48,745.5" stroke="#555" stroke-width="2.1" fill="none"/>
<path d="M592,738.5 L588.5,742 L592,745.5" stroke="#555" stroke-width="2.1" fill="none"/>
<path d="M1093,738.5 L1096.5,742 L1093,745.5" stroke="#555" stroke-width="2.1" fill="none"/>
<path d="M43.7,423.7 C45.3,425.7 50.5,432.2 53.5,435.5 C56.5,438.8 59.3,439.7 61.4,443.3 C63.5,446.9 65.1,449.5 66.1,457 C67.1,464.5 66.8,477.9 67.3,488.4 C67.8,498.9 68.2,509.4 69.2,519.8 C70.2,530.2 72.6,541.9 73.1,551 C73.6,560.1 73.7,567.5 72.4,574.7 C71.1,581.9 68.1,588.4 65.3,594.3 C62.5,600.2 58.9,605.4 55.5,610 C52.1,614.6 46.7,619.8 44.9,621.8" stroke="#ff0000" stroke-width="4.6" fill="none" stroke-linecap="round" stroke-linejoin="round"/>
<path d="M38.6,645.3 C40.1,646.9 45.0,651.5 47.6,655.1 C50.2,658.7 52.8,662.0 54.3,666.9 C55.8,671.8 56.7,678.6 56.7,684.5 C56.7,690.4 55.6,697.6 54.3,702.2 C53.0,706.8 50.6,709.1 48.8,712 C47.0,714.9 44.6,718.5 43.7,719.8" stroke="#ff0000" stroke-width="4.6" fill="none" stroke-linecap="round" stroke-linejoin="round"/>
</svg>

<!-- detail pane -->
<div class="a" style="left:37px;top:750px;width:1062px;height:32px;background:#fff"></div>
<div class="row" style="left:36px;top:752px"><span style="color:#888">·</span>WindowsWidth<span style="color:#888">··</span>=<span style="color:#888">·</span>450</div>
<div class="row" style="left:36px;top:767px"><span style="color:#888">·</span>WindowsWidth<span style="color:#888">··</span>=<span style="color:#888">·</span>450</div>

<svg class="a" style="left:0;top:745px" width="200" height="40">
<path d="M182.5,8 V14.5 H177 M180,11.5 L176.8,14.5 L180,17.5" stroke="#999" stroke-width="1" fill="none"/>
<path d="M182.5,23 V29.5 H177 M180,26.5 L176.8,29.5 L180,32.5" stroke="#999" stroke-width="1" fill="none"/>
</svg>
<!-- status bar -->
<div class="a" style="left:6px;top:782px;width:1093px;height:24px;background:#f0f0f0;border-top:1px solid #d7d7d7"></div>
<div class="a" style="left:5px;top:806px;width:1094px;height:1px;background:#2b88d8"></div>
<div class="t" style="left:16px;top:788px">For Help, press F1. Scroll horizontally with Ctrl-Scrollwheel</div>
<div class="a" style="left:322px;top:786px;width:1px;height:17px;background:#c8c8c8"></div>
<div class="t" style="left:589px;top:788px;color:#000;">Left View:</div>
<div class="a" style="left:648px;top:786px;width:1px;height:17px;background:#a0a0a0"></div>
<div class="t" style="left:652px;top:788px;color:#000;letter-spacing:-0.5px;">ASCII</div>
<svg class="a" style="left:687px;top:793px" width="7" height="4"><polygon points="0,0 7,0 3.5,3.5" fill="#000"/></svg>
<div class="t" style="left:699px;top:788px;color:#000;letter-spacing:-0.5px;">CRLF</div>
<svg class="a" style="left:733px;top:793px" width="7" height="4"><polygon points="0,0 7,0 3.5,3.5" fill="#000"/></svg>
<div class="t" style="left:745px;top:788px;color:#000;">Tab 4</div>
<svg class="a" style="left:781px;top:793px" width="7" height="4"><polygon points="0,0 7,0 3.5,3.5" fill="#000"/></svg>
<div class="t" style="left:799px;top:788px;color:#000;">- 106</div>
<div class="a" style="left:833px;top:786px;width:1px;height:17px;background:#a0a0a0"></div>
<div class="t" style="left:845px;top:788px;color:#000;">Right View:</div>
<div class="a" style="left:913px;top:786px;width:1px;height:17px;background:#a0a0a0"></div>
<div class="t" style="left:917px;top:788px;color:#000;letter-spacing:-0.5px;">ASCII</div>
<svg class="a" style="left:952px;top:793px" width="7" height="4"><polygon points="0,0 7,0 3.5,3.5" fill="#000"/></svg>
<div class="t" style="left:965px;top:788px;color:#000;letter-spacing:-0.5px;">CRLF</div>
<svg class="a" style="left:999px;top:793px" width="7" height="4"><polygon points="0,0 7,0 3.5,3.5" fill="#000"/></svg>
<div class="t" style="left:1011px;top:788px;color:#000;">Tab 4</div>
<svg class="a" style="left:1046px;top:793px" width="7" height="4"><polygon points="0,0 7,0 3.5,3.5" fill="#000"/></svg>
<div class="t" style="left:1063px;top:788px;color:#000;">+ 596</div>

<!-- below window -->
<div class="a" style="left:0;top:807px;width:1099px;height:9px;background:linear-gradient(#dddddd,#f2f2f2 60%)"></div>
<div class="a" style="left:0;top:807px;width:222px;height:9px;background:#fff"></div>
<div class="a" style="left:222px;top:807px;width:12px;height:9px;background:#dedede"></div>
<div class="a" style="left:234px;top:807px;width:1px;height:9px;background:#a8a8a8"></div>
<div class="a" style="left:445px;top:807px;width:1px;height:9px;background:#d0d0d0"></div>
<div class="a" style="left:595px;top:807px;width:1px;height:9px;background:#d0d0d0"></div>
<div class="a" style="left:654px;top:807px;width:1px;height:9px;background:#d0d0d0"></div>
<div class="a" style="left:0;top:807px;width:222px;height:9px;overflow:hidden"><div class="row" style="left:28px;top:3px;font-weight:bold;font-size:15px;letter-spacing:-0.05px">проследите за всеми ва</div></div>
</body></html>
